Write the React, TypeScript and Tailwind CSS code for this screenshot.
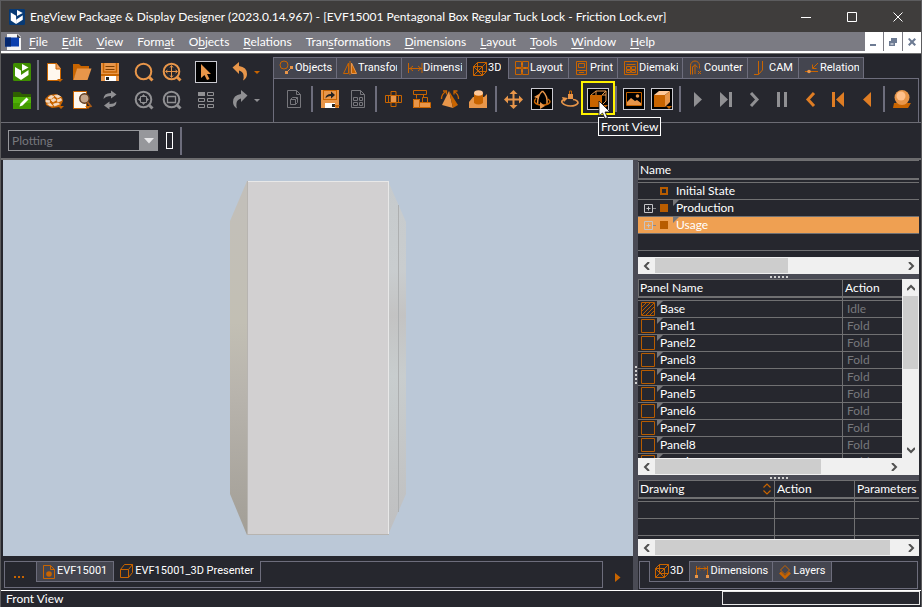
import React from 'react';

const ORANGE = '#c86400';
const LIGHT = '#e8964a';
const GRAY = '#909093';

interface IconProps {
  children: React.ReactNode;
  size?: number;
}

/** All toolbar drawings share a 28px cell, tab drawings a 16px one */
const Icon: React.FC<IconProps> = ({ children, size = 28 }) => (
  <svg width={size} height={size} viewBox={`0 0 ${size} ${size}`} fill="none" className="block shrink-0" aria-hidden="true">
    {children}
  </svg>
);

interface ToolProps {
  label: string;
  children: React.ReactNode;
}

const Tool: React.FC<ToolProps> = ({ label, children }) => (
  <button type="button" aria-label={label} className="block size-7 shrink-0">
    <Icon>{children}</Icon>
  </button>
);

const Separator = () => (
  <div className="flex w-2 shrink-0 justify-center">
    <div className="h-[26px] w-[2px] bg-[#6d6d7c]" />
  </div>
);

const Frame = () => <rect x="3.5" y="3.5" width="21" height="21" fill="#000" stroke="#c9c9d0" />;

const Mark = ({ x = 17, y = 20 }: { x?: number; y?: number }) => (
  <path d={`M${x} ${y}h6l-3 3z`} fill={ORANGE} />
);

const Lens = ({ color, children }: { color: string; children?: React.ReactNode }) => (
  <>
    <circle cx="13.5" cy="13.5" r="7.8" stroke={color} strokeWidth="2" />
    <path d="M18.5 18.5l4 4" stroke={color} strokeWidth="3" />
    {children}
  </>
);

const Logo = ({ color }: { color: string }) => (
  <>
    <rect x="5" y="5" width="18" height="18" rx="1.5" fill={color} />
    <path d="M7 9l6 3.500v9.500L7 18z" fill="#fff" />
    <path d="M14 6l6.500 3.500L14 13z" fill="#fff" />
    <path d="M13 17l7.500-5v5L13 22z" fill="#fff" />
  </>
);

const MainTools = () => (
  <div className="flex items-start pt-1 pl-[7px]">
    <div>
      <Tool label="Home"><Logo color="#3f8f00" /></Tool>
      <Tool label="Edit folder">
        <path d="M5 6h7l2 2h9v5H5z" fill="#2f6000" />
        <path d="M5 11h18v12H5z" fill="#4fb008" />
        <path d="M5 17h18v6H5z" fill="#429a00" />
        <path d="M11.500 20.500l1-3 6-6 2 2-6 6z" fill="#fff" />
      </Tool>
    </div>
    <div className="flex w-1 justify-center pt-[2px]">
      <div className="h-[50px] w-[2px] bg-[#6d6d7c]" />
    </div>
    <div className="mr-[6px] grid grid-cols-3">
      <Tool label="New">
        <path d="M7.500 5.500h9l4 5v12h-13z" fill="#fff8ee" stroke={ORANGE} />
        <path d="M16 5v6h5" fill="#f0a060" stroke={ORANGE} />
        <Mark x={17} y={21} />
      </Tool>
      <Tool label="Open">
        <path d="M5 6h6l2 2h8v4H9L6 22H5z" fill={ORANGE} />
        <path d="M9 10.500h14.500l-4 11.500H5.500z" fill={LIGHT} />
      </Tool>
      <Tool label="Save">
        <path d="M5 5h18v18H5z" fill={LIGHT} />
        <path d="M7.500 5v9h13V5" stroke={ORANGE} strokeWidth="1.500" />
        <path d="M9.500 8.500h9M9.500 11.500h9" stroke="#7a3d00" />
        <path d="M5 16h18v2H5z" fill={ORANGE} />
        <path d="M9 18h11v5H9z" fill="#fff" />
        <path d="M10 19h3v3h-3z" fill="#222" />
      </Tool>
      <Tool label="Library">
        <path d="M5 13l4-4 7-1 6 3 1 4-3 6-8 1-6-3z" fill={ORANGE} />
        <path d="M8 12l3-2.500 3 1-3 2.500zM14.500 9.500l3-.5 3 1.500-3 1.500zM6 14l3.500.5v2L6 16zM11 14l3-1.500 2 1.500-3 2zM17 14l4-1.500.5 2-3.500 1.500zM7.500 18l3-.5 2 2.500-3-.5zM13.500 18l4-1 2 1-5 2z" fill="#f3d9c2" stroke="#f3d9c2" strokeWidth=".8" />
        <Mark x={18} />
      </Tool>
      <Tool label="Preview">
        <path d="M5.500 5.500h13v17h-13z" fill="#fff8ee" stroke={ORANGE} />
        <circle cx="16.500" cy="12.500" r="4.700" fill="#c4a58a" stroke="#5c3a20" strokeWidth="1.500" />
        <path d="M19.500 16l4 5" stroke="#a35a1c" strokeWidth="2" />
        <Mark />
      </Tool>
      <Tool label="Refresh">
        <path d="M7.500 13q0-6 7.500-6V4.500l5.500 4-5.500 4V10q-5 0-7.500 3z" fill={GRAY} />
        <path d="M20.500 15.500q0 5.500-7 5.500v2.500l-5.500-4 5.500-4V18q4.500 0 7-2.500z" fill={GRAY} />
      </Tool>
    </div>
    <div className="mr-[6px] grid grid-cols-2">
      <Tool label="Zoom"><Lens color={LIGHT} /></Tool>
      <Tool label="Zoom extents">
        <Lens color={LIGHT}>
          <path d="M13.500 8v11M8 13.500h11M12 9.500l1.500-2 1.500 2M12 17.500l1.500 2 1.500-2M9.500 12l-2 1.500 2 1.500M17.500 12l2 1.500-2 1.500" stroke={LIGHT} />
        </Lens>
      </Tool>
      <Tool label="Zoom selection">
        <Lens color={GRAY}>
          <path d="M13.500 8l2.500 3h-5zM13.500 19l2.500-3h-5zM8 13.500l3-2.500v5zM19 13.500L16 11v5z" fill={GRAY} />
          <path d="M10.500 10.500h6v6h-6z" stroke={GRAY} />
        </Lens>
      </Tool>
      <Tool label="Zoom window">
        <Lens color={GRAY}>
          <path d="M9.500 10.500h8v6h-8z" stroke={GRAY} strokeWidth="1.300" />
        </Lens>
      </Tool>
    </div>
    <div className="mr-[6px]">
      <Tool label="Select">
        <Frame />
        <path d="M9 6v14l3.500-3 2.500 5 2.500-1-2.500-5h4z" fill={LIGHT} />
      </Tool>
      <Tool label="Grid">
        <path d="M6 6h7v4H6z" fill={GRAY} />
        <path d="M15.500 6.500h6v3h-6zM6.500 12.500h6v3h-6zM15.500 12.500h6v3h-6zM6.500 18.500h6v3h-6zM15.500 18.500h6v3h-6z" stroke={GRAY} />
      </Tool>
    </div>
    <div>
      <Tool label="Undo">
        <path d="M6.500 9.500L13 4v4q8 1 8 8 0 4-4 6.500 1-3 .5-5.500-.5-3.500-4.500-4.500v3.500z" fill={LIGHT} />
      </Tool>
      <Tool label="Redo">
        <path d="M21.500 9.500L15 4v4q-8 1-8 8 0 4 4 6.500-1-3-.5-5.500.5-3.500 4.500-4.500v3.500z" fill={GRAY} />
      </Tool>
    </div>
    <div className="flex flex-col">
      <button type="button" aria-label="Undo list" className="flex h-7 items-center">
        <svg width="6" height="3" viewBox="0 0 6 3"><path d="M0 0h6L3 3z" fill={ORANGE} /></svg>
      </button>
      <button type="button" aria-label="Redo list" className="flex h-7 items-center">
        <svg width="6" height="3" viewBox="0 0 6 3"><path d="M0 0h6L3 3z" fill={GRAY} /></svg>
      </button>
    </div>
  </div>
);

const WireCube = () => (
  <Icon size={16}>
    <path d="M1.500 5.500h9v9h-9zM1.500 5.500l4-4h9v9l-4 4M10.500 5.500l4-4M5.500 1.500v9l-4 4M5.500 10.500h9M1.500 5.500l9 9M5.500 10.500l5-5" stroke={ORANGE} />
  </Icon>
);

const DimensionIcon = () => (
  <Icon size={16}>
    <path d="M1.500 3v10M15 3v10M2 8.500h13M6 6l-3 2.500L6 11M11 6l3 2.500-3 2.500" stroke={ORANGE} />
  </Icon>
);

const tabs = [
  {
    label: 'Objects',
    width: 'w-[63px]',
    icon: (
      <Icon size={16}>
        <circle cx="5" cy="5" r="4" stroke={ORANGE} />
        <path d="M7.500 12.500l5-5" stroke={LIGHT} />
        <path d="M6 11h3v3H6zM11 6h3v3h-3z" fill={LIGHT} />
      </Icon>
    ),
  },
  {
    label: 'Transformations',
    width: 'w-[65px]',
    icon: (
      <Icon size={16}>
        <path d="M6.500 3v10.500h-5z" stroke={ORANGE} />
        <path d="M9.500 3v10.500h5z" fill={ORANGE} stroke={LIGHT} />
        <path d="M8 1v14" stroke={ORANGE} />
      </Icon>
    ),
  },
  { label: 'Dimensions', width: 'w-[65px]', icon: <DimensionIcon /> },
  { label: '3D', width: 'w-[42px]', active: true, icon: <WireCube /> },
  {
    label: 'Layout',
    width: 'w-[60px]',
    icon: (
      <Icon size={16}>
        <path d="M1.500 1.500h6v6h-6zM8.500 1.500h6v6h-6zM1.500 8.500h6v6h-6zM8.500 8.500h6v6h-6z" stroke={ORANGE} />
        <path d="M4 7.500v1M11 7.500v1M7.500 4h1M7.500 11h1" stroke={LIGHT} />
      </Icon>
    ),
  },
  {
    label: 'Print',
    width: 'w-[49px]',
    icon: (
      <Icon size={16}>
        <path d="M2.500 1.500h10v13h-10zM4.500 3.500h6v4h-6zM2.500 10.500h10M5 12.500h5" stroke={ORANGE} />
      </Icon>
    ),
  },
  {
    label: 'Diemaking',
    width: 'w-[65px]',
    icon: (
      <Icon size={16}>
        <path d="M1.500 1.500h13v13h-13zM3.500 4.500h9M3.500 6.500h4v3h-4zM8.500 6.500h4v3h-4zM3.500 10.500h4v2h-4zM8.500 10.500h4v2h-4z" stroke={ORANGE} />
      </Icon>
    ),
  },
  {
    label: 'Counterplate',
    width: 'w-[65px]',
    icon: (
      <Icon size={16}>
        <path d="M2.500 14.500v-9a4 4 0 0 1 9 0v3M4.500 14.500v-8M7 14V5M4.500 7.500L7 4.500l2.500 3M10 11l3 3M13 11l-3 3" stroke={ORANGE} />
      </Icon>
    ),
  },
  {
    label: 'CAM',
    width: 'w-[51px]',
    icon: (
      <Icon size={16}>
        <path d="M5.500 1v13.500H1M5.500 14.500L9.500 10V1" stroke={ORANGE} />
      </Icon>
    ),
  },
  {
    label: 'Relation',
    width: 'w-[65px]',
    icon: (
      <Icon size={16}>
        <path d="M1 11.500h13M14 3L9 8M8.500 4.500v4h4" stroke={ORANGE} />
        <circle cx="5" cy="11.500" r="1.800" fill={LIGHT} />
      </Icon>
    ),
  },
];

const Pointer = () => (
  <svg width="13" height="20" viewBox="0 0 13 20" aria-hidden="true">
    <path d="M1 1v15l3.500-3L7 18.500l2.500-1-2.500-5.500h5z" fill="#fff" stroke="#111" strokeWidth=".8" />
  </svg>
);

const ViewTools = () => (
  <div className="flex items-center px-[6px] pt-[6px]">
    <Tool label="Model document">
      <path d="M7.500 5.500h9l4 4v13h-13z" stroke="#77777c" />
      <path d="M16.500 5.500v4h4M10.500 14.500h5v5h-5zM10.500 14.500l2-2h5v5l-2 2M15.500 14.500l2-2" stroke="#77777c" />
    </Tool>
    <Separator />
    <Tool label="Export">
      <path d="M5 5h18v18H5z" fill={LIGHT} />
      <path d="M7 5h14v10H7z" fill={ORANGE} />
      <path d="M8 6h12v8H8z" fill={LIGHT} />
      <path d="M9.500 13.500q0-4.500 5.500-4.500V6.500l4 3.500-4 3.500V11q-4 0-5.500 2.500z" fill="#222" />
      <path d="M9 18h10v5H9z" fill="#fff" />
      <path d="M16 19h3v3h-3z" fill="#222" />
      <Mark x={18} y={20} />
    </Tool>
    <Tool label="Report">
      <path d="M7.500 5.500h9l4 4v13h-13zM16.500 5.500v4h4M9.500 12.500h4v3h-4zM15.500 12.500h3v3h-3zM9.500 17.500h4v3h-4zM15.500 17.500h3v3h-3z" stroke="#77777c" />
    </Tool>
    <Separator />
    <Tool label="Unfold">
      <path d="M11 6.500h5v15h-5zM5.500 10.500h16v7h-16zM18.500 10.500v7M8.500 10.500v7" stroke={ORANGE} />
      <path d="M11 11h5v6h-5z" fill={LIGHT} />
    </Tool>
    <Tool label="Arrange">
      <path d="M5.500 5.500h13v4h-13zM8.500 9.500v4M15.500 9.500v3" stroke={ORANGE} />
      <path d="M5 14h7v9H5zM12 18h11v5H12z" fill={LIGHT} />
      <path d="M14.500 12.500h5v5h-5zM5.500 14.500h6v8h-6zM11.500 17.500h11v5h-11z" stroke={ORANGE} />
    </Tool>
    <Tool label="Fold angle">
      <path d="M13 6L6 20l11 3z" fill={LIGHT} />
      <path d="M13 6l4 17 5-3z" fill={ORANGE} />
      <path d="M5.500 14q0-5 4-7M22.500 14q0-5-4-7M7 6h3.500v3.500M21.500 6H18v3.500" stroke={ORANGE} strokeWidth="1.300" />
    </Tool>
    <Tool label="Add solid">
      <path d="M5 17l4-5h11l3-3v14H5z" fill={LIGHT} />
      <path d="M10 8h9v10q-4.500 3-9 0z" fill={ORANGE} />
      <ellipse cx="14.500" cy="8" rx="4.500" ry="2.700" fill="#ffc898" />
    </Tool>
    <Separator />
    <Tool label="Pan">
      <path d="M13.500 5l4 4h-3v4.500H19v-3l4 4-4 4v-3h-4.500V20h3l-4 4-4-4h3v-4.500H8v3l-4-4 4-4v3h4.500V9h-3z" fill={LIGHT} />
    </Tool>
    <Tool label="Rotate">
      <Frame />
      <path d="M14.500 6q-5 4-5 13.500M14.500 6q5.500 5 4.500 13" stroke={LIGHT} strokeWidth="1.500" />
      <path d="M8 13.500q-4 4 2 6 5 1.500 10-.5 4-2 0-5" stroke={ORANGE} strokeWidth="1.500" />
      <path d="M6 12l5-3v5zM12 17l5 4-5 3z" fill={LIGHT} />
    </Tool>
    <Tool label="Rotate around axis">
      <path d="M9 14q-4 1.500-3 3.500 3 3.500 8.500 3.500t7.500-3q0-3-5-3.500" stroke={LIGHT} strokeWidth="1.700" />
      <path d="M6 12l6 1-4 4z" fill={LIGHT} />
      <path d="M12 9h5v5h-5z" fill={LIGHT} />
      <path d="M13.500 9V6h2v3" stroke={ORANGE} />
    </Tool>
    <div className="relative">
      <Tool label="Front View">
        <Frame />
        <path d="M7 10l5-4h10l-4 4M22 6v10l-4 4M12 6v5M18 10h4" stroke={LIGHT} />
        <path d="M6 10h12v12H6z" fill={ORANGE} />
        <Mark x={18} />
      </Tool>
      <div className="pointer-events-none absolute -inset-x-[3px] -top-1 -bottom-[2px] border-2 border-[#fff200]" />
      <div role="tooltip" className="absolute top-8 left-[14px] z-10 flex h-[19px] items-center border border-white bg-[#26272e] px-[2px] text-xs whitespace-nowrap">
        Front View
      </div>
      <div className="pointer-events-none absolute top-[15px] left-[14px] z-20"><Pointer /></div>
    </div>
    <Separator />
    <Tool label="Background">
      <Frame />
      <path d="M6.500 7.500h15v13h-15z" stroke={ORANGE} />
      <path d="M7 20v-3l4-4 4 3 2-1 4 3v2z" fill={LIGHT} />
      <circle cx="17.500" cy="11" r="1.800" fill={LIGHT} />
    </Tool>
    <Tool label="Shading">
      <Frame />
      <path d="M6 10l5-4h11l-5 4z" fill="#ffc898" />
      <path d="M17 10l5-4v11l-5 5z" fill={LIGHT} />
      <path d="M6 10h11v12H6z" fill={ORANGE} />
      <Mark x={18} y={21} />
    </Tool>
    <Separator />
    <Tool label="Play"><path d="M10 7l8 7.500-8 7.500z" fill={GRAY} /></Tool>
    <Tool label="Play to end"><path d="M8 7l8 7.500L8 22zM17 7h3v15h-3z" fill={GRAY} /></Tool>
    <Tool label="Next"><path d="M11 8l6 6.500-6 6.500" stroke={GRAY} strokeWidth="3" /></Tool>
    <Tool label="Pause"><path d="M9 7h3v15H9zM16 7h3v15h-3z" fill={GRAY} /></Tool>
    <Tool label="Previous"><path d="M18 8l-6 6.500 6 6.500" stroke="#df7d24" strokeWidth="3" /></Tool>
    <Tool label="To start"><path d="M20 7l-8 7.500 8 7.500zM8 7h3v15H8z" fill="#df7d24" /></Tool>
    <Tool label="Play back"><path d="M19 7l-8 7.500 8 7.500z" fill="#df7d24" /></Tool>
    <Separator />
    <Tool label="Render">
      <path d="M6 18h17l-3 5H5z" fill={ORANGE} />
      <circle cx="14" cy="12.500" r="7.500" fill={LIGHT} />
      <circle cx="13" cy="11" r="4.500" fill="#ffc08a" />
    </Tool>
  </div>
);

const menus = ['File', 'Edit', 'View', 'Format', 'Objects', 'Relations', 'Transformations', 'Dimensions', 'Layout', 'Tools', 'Window', 'Help'];
const accessKeys = [0, 0, 0, 4, 1, 0, 4, 0, 0, 0, 0, 0];

const TitleBar = () => (
  <header className="flex h-[31px] shrink-0 items-center bg-[#3f3d3c]">
    <svg width="16" height="16" viewBox="5 5 18 18" className="mr-[5px] ml-[8px] shrink-0"><Logo color="#073a75" /></svg>
    <h1 className="flex-1 truncate text-xs">
      EngView Package &amp; Display Designer (2023.0.14.967) - [EVF15001 Pentagonal Box Regular Tuck Lock - Friction Lock.evr]
    </h1>
    <div className="flex">
      {['M0 5.500h10', 'M.5.500h9v9h-9z', 'M.5.500l9 9M9.500.500l-9 9'].map((d, index) => (
        <button key={d} type="button" aria-label={['Minimize', 'Maximize', 'Close'][index]} className="flex h-[30px] w-[46px] items-center justify-center">
          <svg width="10" height="10" viewBox="0 0 10 10" fill="none" stroke="#fff"><path d={d} /></svg>
        </button>
      ))}
    </div>
  </header>
);

const MenuBar = () => (
  <nav className="flex h-[19px] shrink-0 items-center bg-[#7b7b83]">
    <svg width="18" height="16" viewBox="0 0 18 16" className="ml-[3px] shrink-0" aria-hidden="true">
      <path d="M3 0h11l3 3v13H3z" fill="#f4f4f4" />
      <path d="M13 0v4h4z" fill="#444" />
      <path d="M1 3.500h14v9H1z" fill="#0a3fae" />
      <path d="M1 3.500h6v9H1z" fill="#05286f" />
    </svg>
    <div className="flex flex-1">
      {menus.map((menu, index) => {
        const key = accessKeys[index];
        return (
          <button key={menu} type="button" className="px-[7px] text-xs leading-[18px]">
            {menu.slice(0, key)}
            <span className="underline underline-offset-2">{menu[key]}</span>
            {menu.slice(key + 1)}
          </button>
        );
      })}
    </div>
    <div className="flex gap-[1px] self-stretch">
      {['M1 7h6v2H1z', 'M3 1h6v5H7V4H3zM1 4h6v5H1zM2.500 6.500h3v1h-3z', 'M1 2l1.500-1L5 3.500 7.500 1 9 2.500 6.500 5 9 7.500 7.500 9 5 6.500 2.500 9 1 7.500 3.500 5z'].map((d, index) => (
        <button key={d} type="button" aria-label={['Minimize window', 'Restore window', 'Close window'][index]} className="flex w-[18px] items-center justify-center bg-white">
          <svg width="10" height="10" viewBox="0 0 10 10" fill="#6d7b93" fillRule="evenodd"><path d={d} /></svg>
        </button>
      ))}
    </div>
  </nav>
);

const Toolbars = () => (
  <>
    <div className="flex h-[69px] shrink-0 border-b border-[#6c6c74] bg-[#26272e]">
      <MainTools />
      <div className="ml-auto flex w-[648px] flex-col pt-[3px] pr-[2px]">
        <div className="flex h-[22px] font-['Roboto',sans-serif] text-[11px]">
          {tabs.map((tab) => (
            <button
              key={tab.label}
              type="button"
              className={`flex shrink-0 items-center overflow-hidden border-t border-l border-[#6d6d7c] pr-1 pl-[5px] ${tab.width} ${
                tab.active ? 'bg-[#26272e]' : 'border-b bg-[#44454f]'
              }`}
            >
              {tab.icon}
              <span className="overflow-hidden whitespace-nowrap">{tab.label}</span>
            </button>
          ))}
          <div className="flex-1 border-b border-l border-[#6d6d7c]" />
        </div>
        <div className="flex-1 border-x border-[#6d6d7c]">
          <ViewTools />
        </div>
      </div>
    </div>
    <div className="flex h-[37px] shrink-0 items-center border-b-2 border-[#6c6c6e] bg-[#26272e] pl-[7px]">
      <div className="relative w-[150px]">
        <select aria-label="Operation" disabled className="h-[21px] w-full appearance-none border border-[#96979b] bg-[#26272e] px-[3px] text-xs text-[#77787d] opacity-100">
          <option>Plotting</option>
        </select>
        <div className="pointer-events-none absolute inset-y-0 right-0 flex w-[19px] items-center justify-center bg-[#96979b]">
          <svg width="10" height="6" viewBox="0 0 10 6"><path d="M0 0h10L5 5.500z" fill="#e6e6e8" /></svg>
        </div>
      </div>
      <button type="button" aria-label="Swatch" className="ml-2 h-[17px] w-[7px] border border-white" />
      <div className="ml-[7px] h-7 w-[2px] bg-[#6d6d7c]" />
    </div>
  </>
);

/** Front face with the two side facets receding behind it */
const Carton = () => (
  <svg width="176" height="356" viewBox="0 0 176 356" aria-label="Carton model" className="shrink-0">
    <defs>
      <linearGradient id="leftFacet" x1="0" y1="0" x2="0" y2="1">
        <stop offset="0" stopColor="#c2bfba" />
        <stop offset=".4" stopColor="#c2bfb4" />
        <stop offset=".6" stopColor="#b8b4ad" />
        <stop offset="1" stopColor="#a29e96" />
      </linearGradient>
      <linearGradient id="rightFacet" x1="0" y1="0" x2="0" y2="1">
        <stop offset="0" stopColor="#c6cacc" />
        <stop offset=".25" stopColor="#c9cdcf" />
        <stop offset=".38" stopColor="#c3c3c3" />
        <stop offset=".55" stopColor="#c8cdce" />
        <stop offset="1" stopColor="#bfbfc0" />
      </linearGradient>
    </defs>
    <path d="M17 1L0 41v273l17 41z" fill="url(#leftFacet)" />
    <path d="M158 1l18 41v272l-18 41z" fill="url(#rightFacet)" />
    <path d="M168.500 25v307" stroke="#adafb0" />
    <path d="M17 1h142v354H17z" fill="#d2d0d1" />
    <path d="M17 1.500h142M158.500 1v353" stroke="#e8e8e8" />
    <path d="M17.500 1v354M17 354.500h142" stroke="#b7b4b0" />
  </svg>
);

const Chevron = ({ d }: { d: string }) => (
  <svg width="8" height="8" viewBox="0 0 8 8" fill="none" stroke="#505050" strokeWidth="2" aria-hidden="true"><path d={d} /></svg>
);

const HScroll = ({ thumb, corner = false }: { thumb: string; corner?: boolean }) => (
  <div className={`flex h-[17px] shrink-0 items-center bg-[#f0f0f0] ${corner ? 'pr-[17px]' : ''}`}>
    <button type="button" aria-label="Scroll left" className="flex w-[17px] justify-center"><Chevron d="M6 0L2 4l4 4" /></button>
    <div className="flex-1"><div className={`h-[15px] bg-[#cdcdcd] ${thumb}`} /></div>
    <button type="button" aria-label="Scroll right" className="flex w-[17px] justify-center"><Chevron d="M2 0l4 4-4 4" /></button>
  </div>
);

const Grip = () => (
  <div className="flex h-[5px] shrink-0 items-center justify-center gap-[2px] bg-[#4a4b55]">
    {[0, 1, 2, 3, 4].map((dot) => <span key={dot} className="size-[2px] bg-[#d0d0d0]" />)}
  </div>
);

const Fold = () => (
  <svg width="6" height="6" viewBox="0 0 6 6" className="absolute top-0 left-0" aria-hidden="true"><path d="M0 0h6L0 6z" fill="#77777a" /></svg>
);

const states = [
  { name: 'Initial State' },
  { name: 'Production', expandable: true },
  { name: 'Usage', expandable: true, selected: true },
];

const StatesTable = () => (
  <section className="flex h-[114px] shrink-0 flex-col">
    <div className="min-h-0 flex-1 overflow-hidden border-t border-[#707072] pt-px">
      <table className="w-full border-separate border-spacing-0 text-left text-xs">
        <thead>
          <tr><th className="h-[18px] border-b-2 border-l border-[#707072] px-px font-normal leading-4">Name</th></tr>
        </thead>
        <tbody>
          <tr><td className="h-[3px] border-b border-[#707072] p-0" /></tr>
          {states.map((state) => (
            <tr key={state.name} className={state.selected ? 'bg-[#efa052]' : ''}>
              <td className="h-[17px] border-b border-[#707072] p-0">
                <div className="flex h-4 items-center">
                  <span className="flex w-[22px] shrink-0 items-center pl-[6px]">
                    {state.expandable && (
                      <svg width="12" height="9" viewBox="0 0 12 9" fill="none" stroke="#c4c4c8" className="shrink-0">
                        <path d="M.5.500h8v8h-8zM2.500 4.500h4M4.500 2.500v4" />
                        <path d="M9 4.500h3" stroke="#88888c" />
                      </svg>
                    )}
                  </span>
                  <span className={`size-2 ${state.expandable ? 'bg-[#b85c00]' : 'border-2 border-[#b85c00]'}`} />
                  <span className="relative ml-[5px] self-stretch pl-[3px] leading-4">
                    {state.expandable && <Fold />}
                    <span className="relative">{state.name}</span>
                  </span>
                </div>
              </td>
            </tr>
          ))}
          <tr><td className="h-[17px] border-b border-[#707072] p-0" /></tr>
        </tbody>
      </table>
    </div>
    <HScroll thumb="w-[54%]" />
  </section>
);

const panels = ['Base', 'Panel1', 'Panel2', 'Panel3', 'Panel4', 'Panel5', 'Panel6', 'Panel7', 'Panel8', 'Panel9'];

const PanelsTable = () => (
  <section className="flex min-h-0 flex-1 flex-col">
    <div className="flex min-h-0 flex-1">
      <div className="min-w-0 flex-1 overflow-hidden">
        <table className="w-full table-fixed border-separate border-spacing-0 text-left text-xs">
          <thead>
            <tr>
              <th className="h-[19px] border-y border-b-2 border-l border-[#707072] px-px font-normal leading-4">Panel Name</th>
              <th className="w-[60px] border-y border-b-2 border-l border-[#707072] px-[2px] font-normal leading-4">Action</th>
            </tr>
          </thead>
          <tbody>
            <tr>
              <td className="h-[3px] border-b border-[#707072] p-0" />
              <td className="border-b border-l border-[#707072] p-0" />
            </tr>
            {panels.map((panel, index) => (
              <tr key={panel}>
                <td className="h-[17px] border-b border-[#707072] p-0">
                  <div className="flex h-4 items-center">
                    <svg width="14" height="14" viewBox="0 0 14 14" fill="none" stroke="#b85c00" className="ml-[3px] shrink-0">
                      <path d="M.5.500h13v13H.5z" />
                      {index === 0 && <path d="M1 5l4-4M1 9l8-8M1 13L13 1M5 13l8-8M9 13l4-4" />}
                    </svg>
                    <span className="relative ml-[2px] self-stretch pl-[3px] leading-4">
                      <Fold />
                      <span className="relative">{panel}</span>
                    </span>
                  </div>
                </td>
                <td className="border-b border-l border-[#707072] p-0 pl-1 leading-4 text-[#77787c]">{index === 0 ? 'Idle' : 'Fold'}</td>
              </tr>
            ))}
          </tbody>
        </table>
      </div>
      <div className="flex w-[17px] shrink-0 flex-col items-center bg-[#f0f0f0]">
        <button type="button" aria-label="Scroll up" className="flex h-[17px] items-center"><Chevron d="M0 6l4-4 4 4" /></button>
        <div className="w-[15px] flex-1"><div className="h-1/2 bg-[#cdcdcd]" /></div>
        <button type="button" aria-label="Scroll down" className="flex h-[17px] items-center"><Chevron d="M0 2l4 4 4-4" /></button>
      </div>
    </div>
    <HScroll thumb="w-[72%]" corner />
  </section>
);

const DrawingsTable = () => (
  <section className="flex h-[76px] shrink-0 flex-col">
    <div className="min-h-0 flex-1 overflow-hidden">
      <table className="w-full table-fixed border-separate border-spacing-0 text-left text-xs">
        <thead>
          <tr>
            <th className="h-[19px] border-y border-b-2 border-l border-[#707072] px-px font-normal leading-4">
              <span className="flex items-center justify-between pr-[2px]">
                Drawing
                <svg width="8" height="12" viewBox="0 0 8 12" fill="none" stroke={ORANGE} strokeWidth="1.200"><path d="M.5 4.500L4 1l3.500 3.500M.5 7.500L4 11l3.500-3.500" /></svg>
              </span>
            </th>
            <th className="w-20 border-y border-b-2 border-l border-[#707072] px-[2px] font-normal leading-4">Action</th>
            <th className="w-[65px] border-y border-b-2 border-l border-[#707072] px-[2px] font-normal leading-4">Parameters</th>
          </tr>
        </thead>
        <tbody>
          {['h-[3px]', 'h-[17px]', 'h-[17px]', 'h-[4px]'].map((height, index) => (
            <tr key={index}>
              <td className={`${height} border-b border-[#707072] p-0`} />
              <td className="border-b border-l border-[#707072] p-0" />
              <td className="border-b border-l border-[#707072] p-0" />
            </tr>
          ))}
        </tbody>
      </table>
    </div>
    <HScroll thumb="w-[95%]" />
  </section>
);

const Workspace = () => (
  <div className="flex min-w-0 flex-1 flex-col">
    <main className="flex min-h-0 flex-1 items-center justify-center overflow-hidden bg-[#bbc8d7]"><Carton /></main>
    <div className="flex h-[34px] shrink-0 pt-[5px] pr-3 pb-[2px] pl-px font-['Roboto',sans-serif] text-[11px]">
      <div className="flex flex-1 items-start border-x border-b border-[#6d6d7c]">
        <button type="button" aria-label="More pages" className="flex h-[21px] w-[31px] items-end justify-center gap-[2px] border-t border-[#6d6d7c] pr-1 pb-[4px]">
          {[0, 1, 2].map((dot) => <span key={dot} className="size-[2px] bg-[#c86400]" />)}
        </button>
        <button type="button" className="flex h-[21px] items-center border border-[#6d6d7c] bg-[#44454f] pr-[6px] pl-[4px]">
          <Icon size={16}>
            <path d="M2.500 1.500h7l4 4v9h-11z" stroke={ORANGE} />
            <path d="M9.500 1.500v4h4" stroke={ORANGE} />
            <circle cx="8" cy="10" r="2.800" fill={ORANGE} />
          </Icon>
          EVF15001
        </button>
        <button type="button" className="flex h-[21px] items-center border-r border-b border-[#6d6d7c] pr-[6px] pl-[5px]">
          <Icon size={16}>
            <path d="M1.500 6.500h8v8h-8zM1.500 6.500l4-5h8v8l-4 5M9.500 6.500l4-5" stroke={ORANGE} />
          </Icon>
          EVF15001_3D Presenter
        </button>
        <div className="flex-1 border-t border-[#6d6d7c]" />
      </div>
      <button type="button" aria-label="Next page" className="mt-3 ml-3 self-start">
        <svg width="6" height="9" viewBox="0 0 6 9"><path d="M0 0l5.500 4.500L0 9z" fill={ORANGE} /></svg>
      </button>
    </div>
  </div>
);

const SideTabs = () => (
  <div className="flex h-[34px] shrink-0 px-px pt-[5px] pb-px font-['Roboto',sans-serif] text-[11px]">
    <div className="flex flex-1 items-start border-x border-b border-[#6d6d7c]">
      <div className="w-[9px] border-t border-[#6d6d7c]" />
      <button type="button" className="flex h-[21px] items-center border-b border-l border-[#6d6d7c] pr-[6px] pl-[4px]">
        <WireCube />3D
      </button>
      <button type="button" className="flex h-[21px] items-center border border-[#6d6d7c] bg-[#44454f] px-1">
        <Icon size={16}>
          <path d="M2.500 2v11M13.500 2v11M3 4.500h10M6 2.500l-2 2 2 2M10 2.500l2 2-2 2" stroke={ORANGE} />
          <path d="M1 11h3v3H1zM12 11h3v3h-3z" fill={LIGHT} />
        </Icon>
        Dimensions
      </button>
      <button type="button" className="flex h-[21px] items-center border-y border-r border-[#6d6d7c] bg-[#44454f] pr-[6px] pl-1">
        <Icon size={16}>
          <path d="M3 8.500L8 13.500l5-5" stroke={ORANGE} strokeWidth="2.500" />
          <path d="M8 1.500l4.500 4.500L8 10.500 3.500 6z" stroke={ORANGE} />
        </Icon>
        Layers
      </button>
      <div className="flex-1 border-t border-[#6d6d7c]" />
    </div>
  </div>
);

export default function App() {
  return (
    <div className="flex h-screen flex-col overflow-hidden border-x border-t border-[#5c5c5e] bg-[#26272e] font-['Lato','Open_Sans',sans-serif] text-xs text-white">
      <TitleBar />
      <MenuBar />
      <div className="h-[3px] shrink-0 border-t-2 border-white bg-[#707070]" />
      <Toolbars />
      <div className="flex min-h-0 flex-1 pr-[2px] pl-[2px]">
        <Workspace />
        <div className="flex w-[5px] shrink-0 flex-col items-center justify-center gap-[2px] bg-[#4a4b55]">
          {[0, 1, 2, 3, 4].map((dot) => <span key={dot} className="size-[2px] bg-[#d0d0d0]" />)}
        </div>
        <aside className="flex w-[281px] shrink-0 flex-col">
          <StatesTable />
          <Grip />
          <PanelsTable />
          <Grip />
          <DrawingsTable />
          <SideTabs />
        </aside>
      </div>
      <footer className="flex h-[17px] shrink-0 items-stretch border-t border-white">
        <p className="flex-1 pl-[5px] leading-4">Front View</p>
        <div className="mr-px h-[14px] w-[198px] border border-[#e8e8e8]" />
      </footer>
    </div>
  );
}
